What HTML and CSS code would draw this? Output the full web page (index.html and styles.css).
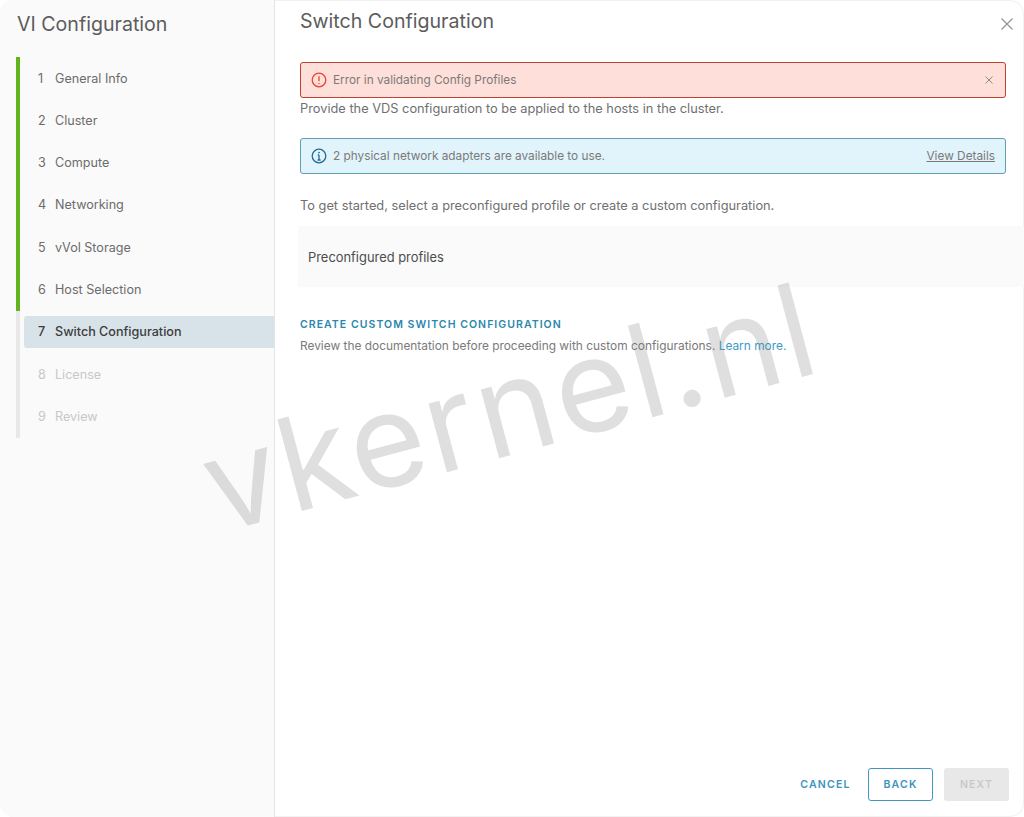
FILE: index.html
```html
<!DOCTYPE html>
<html>
<head>
  <title>VI Configuration</title>
  <link rel="stylesheet" href="styles.css">
</head>
<body>
  <div class="wizard">
    <div class="sidebar">
      <h2 class="wizard-title">VI Configuration</h2>
      <ul class="steps">
        <li class="step done"><a><span class="num">1</span>General Info</a></li>
        <li class="step done"><a><span class="num">2</span>Cluster</a></li>
        <li class="step done"><a><span class="num">3</span>Compute</a></li>
        <li class="step done"><a><span class="num">4</span>Networking</a></li>
        <li class="step done"><a><span class="num">5</span>vVol Storage</a></li>
        <li class="step done"><a><span class="num">6</span>Host Selection</a></li>
        <li class="step active"><a><span class="num">7</span>Switch Configuration</a></li>
        <li class="step todo"><a><span class="num">8</span>License</a></li>
        <li class="step todo"><a><span class="num">9</span>Review</a></li>
      </ul>
    </div>

    <div class="main">
      <div class="main-head">
        <h3 class="page-title">Switch Configuration</h3>
        <svg class="close-icon" viewBox="0 0 12 12"><path d="M0.5 0.5L11.5 11.5M11.5 0.5L0.5 11.5"/></svg>
      </div>

      <div class="alert alert-error">
        <svg class="alert-icon" viewBox="0 0 16 16"><circle cx="8" cy="8" r="6.8"/><path d="M8 4.2V9.2M8 10.9V12"/></svg>
        <span class="alert-text">Error in validating Config Profiles</span>
        <svg class="alert-close" viewBox="0 0 8 8"><path d="M0.5 0.5L7.5 7.5M7.5 0.5L0.5 7.5"/></svg>
      </div>
      <p class="intro">Provide the VDS configuration to be applied to the hosts in the cluster.</p>

      <div class="alert alert-info">
        <svg class="alert-icon" viewBox="0 0 16 16"><circle cx="8" cy="8" r="6.8"/><path d="M8 7V12M6.6 12H9.6M6.8 7H8"/><circle class="dot" cx="8" cy="4.6" r="0.9"/></svg>
        <span class="alert-text">2 physical network adapters are available to use.</span>
        <a class="alert-link">View Details</a>
      </div>

      <p class="get-started">To get started, select a preconfigured profile or create a custom configuration.</p>
      <div class="profiles">Preconfigured profiles</div>

      <a class="custom-link">CREATE CUSTOM SWITCH CONFIGURATION</a>
      <p class="review-note">Review the documentation before proceeding with custom configurations. <a>Learn more.</a></p>

      <div class="footer">
        <button class="btn btn-link">CANCEL</button>
        <button class="btn btn-outline">BACK</button>
        <button class="btn btn-disabled">NEXT</button>
      </div>
    </div>

    <div class="watermark">vkernel.nl</div>
  </div>
</body>
</html>
```

FILE: styles.css
```css
* {
  box-sizing: border-box;
}

html, body {
  height: 100%;
}

body {
  margin: 0;
  background-color: #fff;
  font-family: Inter, "Noto Sans", sans-serif;
  color: #707070;
  overflow: hidden;
}

.wizard {
  position: relative;
  display: flex;
  height: 817px;
  border-radius: 14px;
  box-shadow: inset 0 0 0 1px #f2f2f2;
  overflow: hidden;
}

.sidebar {
  width: 275px;
  flex: none;
  background-color: #fafafa;
  border-right: 1px solid #e4e4e4;
}

.wizard-title {
  margin: 0;
  padding: 12px 0 0 17px;
  height: 57px;
  font-size: 19.6px;
  line-height: 24px;
  font-weight: 400;
  color: #5c5c5c;
}

.steps {
  list-style: none;
  margin: 0 0 0 16px;
  padding: 0;
}

.step {
  height: 42.3px;
  padding: 5.1px 0 5.2px 4px;
  border-left: 4px solid #e8e8e8;
}

.step a {
  display: flex;
  align-items: center;
  height: 32px;
  padding-left: 14px;
  font-size: 12.6px;
  color: #6c6c6c;
  border-radius: 3px 0 0 3px;
}

.num {
  width: 17px;
  flex: none;
}

.step.done {
  border-left-color: #62b41f;
}

.step.active a {
  background-color: #d8e3e9;
  color: #3c3c3c;
  font-weight: 500;
}

.step.todo a {
  color: #c8c8c8;
}

.main {
  flex: 1;
  display: flex;
  flex-direction: column;
  padding: 0 15px 16px 25px;
  min-width: 0;
}

.main-head {
  display: flex;
  justify-content: space-between;
  height: 62px;
}

.page-title {
  margin: 0;
  padding-top: 9px;
  font-size: 19.6px;
  line-height: 24px;
  font-weight: 400;
  color: #5c5c5c;
}

.close-icon {
  width: 12px;
  height: 12px;
  margin: 18px -4px 0 0;
  fill: none;
  stroke: #949494;
  stroke-width: 1.2;
}

.alert {
  display: flex;
  align-items: center;
  width: 706px;
  height: 36px;
  padding: 0 10px;
  border-radius: 3px;
  font-size: 11.8px;
}

.alert-error {
  background-color: #ffdfd9;
  border: 1px solid #c4402f;
}

.alert-info {
  background-color: #e1f3fb;
  border: 1px solid #5f9db5;
}

.alert-icon {
  width: 16px;
  height: 16px;
  margin-right: 6px;
  flex: none;
  fill: none;
  stroke-width: 1.3;
}

.alert-error .alert-icon {
  stroke: #e8452c;
}

.alert-info .alert-icon {
  stroke: #1f6c94;
}

.alert-info .dot {
  fill: #1f6c94;
  stroke: none;
}

.alert-text {
  flex: 1;
  color: #7a7a7a;
}

.alert-close {
  width: 8px;
  height: 8px;
  margin-right: 2px;
  fill: none;
  stroke: #8a8a8a;
  stroke-width: 1;
}

.alert-link {
  color: #7a7a7a;
  text-decoration: underline;
}

.intro {
  margin: 0;
  height: 40px;
  padding-top: 3px;
  font-size: 12.8px;
  line-height: 15px;
}

.get-started {
  margin: 0;
  padding-top: 24px;
  font-size: 12.8px;
  line-height: 15px;
}

.profiles {
  display: flex;
  align-items: center;
  height: 61px;
  margin: 13px -15px 0 -2px;
  padding: 2px 0 0 10px;
  background-color: #fafafa;
  font-size: 12.9px;
  color: #4c4c4c;
}

.custom-link {
  margin-top: 31px;
  font-size: 10.5px;
  line-height: 13px;
  font-weight: 600;
  letter-spacing: 1.05px;
  color: #2a87ad;
}

.review-note {
  margin: 8px 0 0;
  font-size: 11.9px;
  line-height: 14px;
  color: #7a7a7a;
}

.review-note a {
  color: #3a9cc9;
}

.footer {
  margin-top: auto;
  display: flex;
  justify-content: flex-end;
  align-items: center;
}

.btn {
  height: 33px;
  width: 65px;
  margin-left: 11px;
  padding: 0;
  border: 1px solid transparent;
  border-radius: 3px;
  background: none;
  font-family: inherit;
  font-size: 10.5px;
  font-weight: 600;
  letter-spacing: 1.2px;
}

.btn-link {
  margin-right: 10px;
  color: #3b93bd;
}

.btn-outline {
  margin-left: 0;
  border-color: #3f97c2;
  color: #3b93bd;
}

.btn-disabled {
  background-color: #e8e8e8;
  color: #c8c8c8;
}

.watermark {
  position: absolute;
  left: 206px;
  top: 403px;
  font-family: Inter, "Liberation Sans", sans-serif;
  font-size: 130px;
  font-weight: 400;
  letter-spacing: 3px;
  line-height: 170px;
  color: rgba(120, 120, 120, 0.24);
  white-space: nowrap;
  transform: rotate(-15deg);
  transform-origin: left center;
}
```
